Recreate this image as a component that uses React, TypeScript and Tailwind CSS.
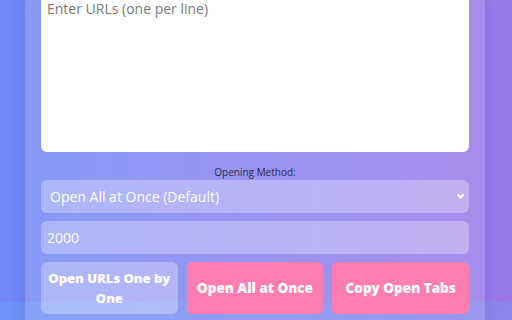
import React from 'react';

export default function App(): React.ReactElement {
  return (
    <div
      className="relative h-[320px] w-[512px] overflow-hidden bg-gradient-to-r from-[#7088f6] to-[#9a79e8]"
      style={{ fontFamily: '"Open Sans", "Liberation Sans", sans-serif' }}
    >
      {/* lower band where the body background repeats */}
      <div className="absolute inset-x-0 bottom-0 h-[18px] bg-gradient-to-r from-[#6e93f8] to-[#8c86eb]" />
      <div className="relative flex h-full pl-[25px]">
        <div className="flex w-[460px] flex-col bg-white/15 px-4 shadow-[0_0_12px_rgba(80,60,180,0.25)]">
          <textarea
            className="-mt-[12px] h-[164px] w-full resize-none rounded-md bg-white px-[6px] pt-[10px] text-[14px] text-gray-700 outline-none placeholder:text-[#7a7a7a]"
            placeholder="Enter URLs (one per line)"
          />
          <label className="mt-[13px] mb-[1px] text-center text-[10px] leading-[14px] text-[#2d2a4a]">
            Opening Method:
          </label>
          <div className="relative">
            <select className="h-[33px] w-full appearance-none rounded-md bg-white/30 pl-[9px] text-[14px] text-white outline-none">
              <option>Open All at Once (Default)</option>
            </select>
            <svg
              className="pointer-events-none absolute right-[4px] top-[13px]"
              width="9"
              height="7"
              viewBox="0 0 9 7"
            >
              <path d="M1.5 1.5 L4.5 4.5 L7.5 1.5" fill="none" stroke="white" strokeWidth="1.8" />
            </svg>
          </div>
          <input
            className="mt-[8px] h-[33px] w-full rounded-md bg-white/30 px-[6px] text-[14px] text-white outline-none"
            defaultValue="2000"
          />
          <div className="mt-[8px] grid grid-cols-3 gap-[9px]">
            <button className="h-[52px] rounded-md bg-white/30 px-[3px] text-[13px] font-extrabold leading-[20px] text-white">
              Open URLs One by One
            </button>
            <button className="h-[52px] rounded-md bg-[#ff7eb1] px-2 text-[13.5px] font-extrabold text-white">
              Open All at Once
            </button>
            <button className="h-[52px] rounded-md bg-[#ff7eb1] px-2 text-[13.5px] font-extrabold text-white">
              Copy Open Tabs
            </button>
          </div>
        </div>
      </div>
    </div>
  );
}
